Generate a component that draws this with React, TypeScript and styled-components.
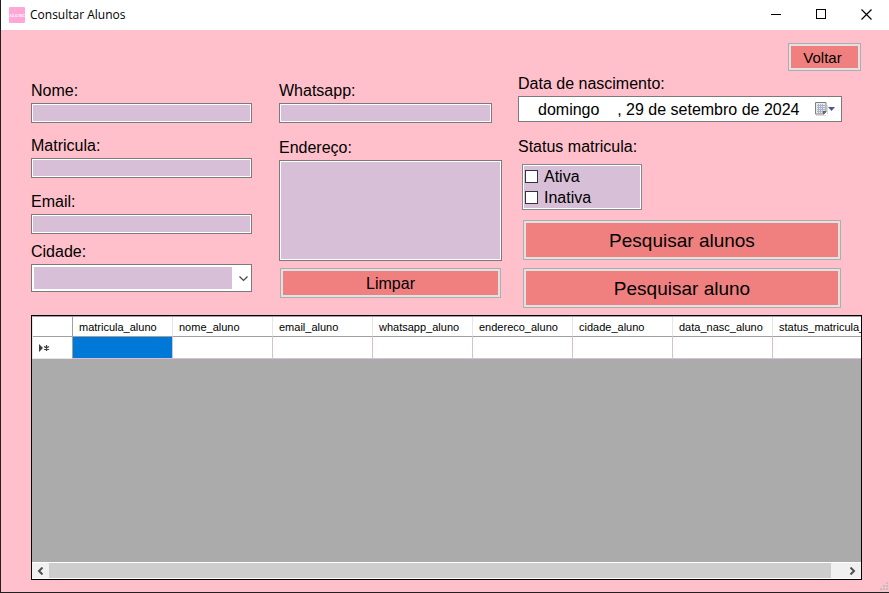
import React from "react";
import styled, { createGlobalStyle, css } from "styled-components";

const GlobalStyle = createGlobalStyle`
  *, *::before, *::after { box-sizing: border-box; }
  body { margin: 0; background: #ffc0cb; }
  button, input, select, textarea { font: inherit; color: inherit; margin: 0; border-radius: 0; }
`;

const sans = `"Liberation Sans", Arial, sans-serif`;

const Window = styled.div`
  position: relative;
  display: flex;
  flex-direction: column;
  min-height: 100vh;
  border-left: 1px solid #1f1f1f;
  border-bottom: 1px solid #1f1f1f;
  background: #ffc0cb;
  color: #000;
  font: 16px/20px ${sans};
`;

const TitleBar = styled.header`
  display: flex;
  align-items: center;
  height: 30px;
  padding-left: 8px;
  background: #fff;
`;

const Title = styled.h1`
  flex: 1;
  margin: 0 0 0 5px;
  font: 12px/16px "Open Sans", "Noto Sans", sans-serif;
`;

const CaptionButton = styled.button`
  display: grid;
  place-items: center;
  width: 45px;
  height: 30px;
  padding: 0;
  border: 0;
  background: transparent;
`;

const Client = styled.main`
  flex: 1;
  display: flex;
  flex-direction: column;
  padding: 13px 27px 12px 30px;
`;

const Toolbar = styled.div`
  display: flex;
  justify-content: flex-end;
  padding-right: 1px;
`;

const actionSizes = {
  small: css`width: 73px; height: 28px; padding-right: 4px; font-size: 15px;`,
  medium: css`height: 30px; font-size: 16px;`,
  large: css`height: 40px; font-size: 19px;`,
};

const ActionButton = styled.button<{ $size: keyof typeof actionSizes }>`
  padding: 1px 0 0;
  border: 1px solid #adadad;
  background: #f08080;
  box-shadow: inset 0 0 0 2px #e1e1e1;
  ${(p) => actionSizes[p.$size]}
`;

const Form = styled.form`
  display: grid;
  grid-template-columns: 248fr 239fr 324fr;
  align-items: start;
  padding-right: 20px;
`;

const Column = styled.div<{ $top: number; $right?: number }>`
  display: flex;
  flex-direction: column;
  padding-top: ${(p) => p.$top}px;
  padding-right: ${(p) => p.$right ?? 0}px;
`;

const Field = styled.div<{ $before?: number; $inset?: number }>`
  display: flex;
  flex-direction: column;
  gap: 2px;
  margin-top: ${(p) => p.$before ?? 0}px;
  padding-right: ${(p) => p.$inset ?? 0}px;
`;

const box = css`
  width: 100%;
  border: 1px solid #7a7a7a;
  background: #d8bfd8;
  box-shadow: inset 0 0 0 1px #fff;
  outline: none;
`;

const TextBox = styled.input`
  ${box}
  height: 20px;
  padding: 0 3px;
`;

const TextArea = styled.textarea`
  ${box}
  display: block;
  height: 101px;
  padding: 3px;
  resize: none;
`;

const Combo = styled.div`
  position: relative;
  display: flex;

  svg {
    position: absolute;
    right: 4px;
    top: 12px;
    pointer-events: none;
  }
`;

const Select = styled.select`
  appearance: none;
  width: 100%;
  height: 28px;
  padding: 2px 19px 2px 2px;
  border: 1px solid #7a7a7a;
  background: linear-gradient(#d8bfd8, #d8bfd8) content-box, #fff;
`;

const DatePicker = styled.div`
  display: flex;
  align-items: center;
  height: 26px;
  border: 1px solid #7a7a7a;
  background: #fff;
`;

const DateInput = styled.input`
  flex: 1;
  min-width: 0;
  height: 24px;
  padding: 2px 0 0 19px;
  border: 0;
  background: transparent;
  outline: none;
`;

const CalendarButton = styled.button`
  display: flex;
  padding: 0 5px 0 0;
  border: 0;
  background: transparent;
`;

const StatusGroup = styled.fieldset`
  min-width: 0;
  margin: 15px 0 0;
  padding: 0;
  border: 0;
`;

const StatusTitle = styled.legend`
  padding: 0;
`;

const CheckList = styled.div`
  width: 120px;
  margin: 7px 0 0 4px;
  padding: 1px 2px;
  border: 1px solid #828790;
  background: #d8bfd8;
  box-shadow: inset 0 0 0 1px #fff;
`;

const CheckRow = styled.label`
  display: flex;
  align-items: center;
  gap: 6px;
  height: 21px;
`;

const CheckBox = styled.input`
  appearance: none;
  width: 13px;
  height: 13px;
  border: 1px solid #333;
  background: #fff;

  &:checked { background: #0078d7; }
`;

const ButtonStack = styled.div<{ $top: number; $left: number }>`
  display: flex;
  flex-direction: column;
  gap: 8px;
  margin: ${(p) => p.$top}px 1px 0 ${(p) => p.$left}px;
`;

const DataGrid = styled.section`
  flex: 1;
  display: flex;
  flex-direction: column;
  min-width: 0;
  min-height: 160px;
  margin-top: 7px;
  border: 1px solid #000;
  background: #ababab;
`;

const GridView = styled.div`
  flex: 1;
  overflow: hidden;
`;

const Table = styled.table`
  width: 841px;
  table-layout: fixed;
  border-collapse: separate;
  border-spacing: 0;
  border-top: 1px solid #a0a0a0;
  border-left: 1px solid #e5e5e5;
  background: #fff;
  font-size: 11px;
  line-height: 13px;
`;

const ColumnHeader = styled.th`
  height: 20px;
  padding: 2px 0 0 6px;
  border-right: 1px solid #e5e5e5;
  border-bottom: 1px solid #a0a0a0;
  text-align: left;
  font-weight: normal;
  white-space: nowrap;

  &:first-child {
    width: 40px;
    border-right-color: #a0a0a0;
  }
`;

const RowHeader = styled.th`
  height: 22px;
  padding: 0 0 0 6px;
  border-right: 1px solid #a0a0a0;
  border-bottom: 1px solid #e5e5e5;
  text-align: left;

  svg { display: block; }
`;

const Cell = styled.td<{ $selected?: boolean }>`
  padding: 0;
  border-right: 1px solid #d8bfd8;
  border-bottom: 1px solid #d8bfd8;
  background: ${(p) => (p.$selected ? "#0078d7" : "#fff")};
  background-clip: padding-box;
`;

const ScrollBar = styled.div`
  display: flex;
  height: 17px;
  border-top: 1px solid #fff;
  border-bottom: 1px solid #fff;
  background: #f0f0f0;
`;

const ScrollButton = styled.button`
  display: grid;
  place-items: center;
  width: 17px;
  padding: 0;
  border: 0;
  background: transparent;
`;

const ScrollTrack = styled.div`
  flex: 1;
  padding-right: 13px;
`;

const ScrollThumb = styled.div`
  height: 100%;
  background: #cdcdcd;
`;

const Grip = styled.svg`
  position: absolute;
  right: 1px;
  bottom: 2px;
`;

const AppIcon = () => (
  <svg width="16" height="16" viewBox="0 0 16 16" aria-hidden="true">
    <rect width="16" height="16" rx="1" fill="#ffa8d8" />
    <text x="8" y="10" textAnchor="middle" fontFamily="Liberation Serif, serif" fontStyle="italic" fontWeight="bold" fontSize="5" fill="#fff">
      ALURC
    </text>
  </svg>
);

const CalendarIcon = () => (
  <svg width="22" height="16" viewBox="0 0 22 16" aria-hidden="true">
    <path d="M2 14.500h10M13.500 4v9" stroke="#dedbd9" />
    <path d="M1.500 1.500h10.500v9.500l-2 2h-8.500z" fill="#e6eaf1" stroke="#857d7a" />
    <path d="M3 4.500h8M3 6.500h8M3 8.500h8M3 10.500h6M4.500 3v9M6.500 3v9M8.500 3v9" stroke="#a9b4ca" />
    <path d="M9 13.500v-3.500h3.500z" fill="#5f5957" />
    <path d="M14 6h7l-3.500 4z" fill="#46598c" />
  </svg>
);

const columns = [
  "matricula_aluno",
  "nome_aluno",
  "email_aluno",
  "whatsapp_aluno",
  "endereco_aluno",
  "cidade_aluno",
  "data_nasc_aluno",
  "status_matricula_aluno",
];

export default function App() {
  return (
    <>
      <GlobalStyle />
      <Window>
        <TitleBar>
          <AppIcon />
          <Title>Consultar Alunos</Title>
          <CaptionButton type="button" aria-label="Minimizar">
            <svg width="11" height="12" shapeRendering="crispEdges"><path d="M0 5.500h10" stroke="#000" /></svg>
          </CaptionButton>
          <CaptionButton type="button" aria-label="Maximizar">
            <svg width="11" height="12" shapeRendering="crispEdges"><path d="M.5.5h9v9h-9z" fill="none" stroke="#000" /></svg>
          </CaptionButton>
          <CaptionButton type="button" aria-label="Fechar">
            <svg width="11" height="12"><path d="M.5.5l10 10M10.500.5l-10 10" stroke="#000" strokeWidth="1.200" /></svg>
          </CaptionButton>
        </TitleBar>
        <Client>
          <Toolbar>
            <ActionButton type="button" $size="small">Voltar</ActionButton>
          </Toolbar>
          <Form onSubmit={(e) => e.preventDefault()}>
            <Column $top={10} $right={27}>
              <Field>
                <label htmlFor="nome">Nome:</label>
                <TextBox id="nome" />
              </Field>
              <Field $before={13}>
                <label htmlFor="matricula">Matricula:</label>
                <TextBox id="matricula" />
              </Field>
              <Field $before={14}>
                <label htmlFor="email">Email:</label>
                <TextBox id="email" type="email" />
              </Field>
              <Field $before={8}>
                <label htmlFor="cidade">Cidade:</label>
                <Combo>
                  <Select id="cidade"><option value="" /></Select>
                  <svg width="9" height="6" aria-hidden="true"><path d="M.5.5l4 4 4-4" fill="none" stroke="#444" strokeWidth="1.200" /></svg>
                </Combo>
              </Field>
            </Column>
            <Column $top={10} $right={16}>
              <Field $inset={10}>
                <label htmlFor="whatsapp">Whatsapp:</label>
                <TextBox id="whatsapp" type="tel" />
              </Field>
              <Field $before={15}>
                <label htmlFor="endereco">Endereço:</label>
                <TextArea id="endereco" />
              </Field>
              <ButtonStack $top={7} $left={1}>
                <ActionButton type="reset" $size="medium">Limpar</ActionButton>
              </ButtonStack>
            </Column>
            <Column $top={3}>
              <Field>
                <label htmlFor="nascimento">Data de nascimento:</label>
                <DatePicker>
                  <DateInput id="nascimento" readOnly value="domingo    , 29 de setembro de 2024" />
                  <CalendarButton type="button" aria-label="Abrir calendário">
                    <CalendarIcon />
                  </CalendarButton>
                </DatePicker>
              </Field>
              <StatusGroup>
                <StatusTitle>Status matricula:</StatusTitle>
                <CheckList>
                  <CheckRow><CheckBox type="checkbox" />Ativa</CheckRow>
                  <CheckRow><CheckBox type="checkbox" />Inativa</CheckRow>
                </CheckList>
              </StatusGroup>
              <ButtonStack $top={10} $left={5}>
                <ActionButton type="button" $size="large">Pesquisar alunos</ActionButton>
                <ActionButton type="submit" $size="large">Pesquisar aluno</ActionButton>
              </ButtonStack>
            </Column>
          </Form>
          <DataGrid aria-label="Alunos">
            <GridView>
              <Table>
                <thead>
                  <tr>
                    <ColumnHeader scope="col" />
                    {columns.map((name) => (
                      <ColumnHeader key={name} scope="col">{name}</ColumnHeader>
                    ))}
                  </tr>
                </thead>
                <tbody>
                  <tr>
                    <RowHeader scope="row">
                      <svg width="12" height="8" aria-label="Nova linha">
                        <path d="M0 0l4 4-4 4z" fill="#404040" />
                        <path d="M7.500 1v6M5 2.500l5 3M10 2.500l-5 3" stroke="#404040" strokeWidth="1.300" />
                      </svg>
                    </RowHeader>
                    {columns.map((name, i) => (
                      <Cell key={name} $selected={i === 0} />
                    ))}
                  </tr>
                </tbody>
              </Table>
            </GridView>
            <ScrollBar>
              <ScrollButton type="button" aria-label="Rolar para a esquerda">
                <svg width="7" height="8"><path d="M5.500.5L2 4l3.500 3.500" fill="none" stroke="#505050" strokeWidth="2" /></svg>
              </ScrollButton>
              <ScrollTrack><ScrollThumb /></ScrollTrack>
              <ScrollButton type="button" aria-label="Rolar para a direita">
                <svg width="7" height="8"><path d="M1.500.5L5 4 1.500 7.500" fill="none" stroke="#505050" strokeWidth="2" /></svg>
              </ScrollButton>
            </ScrollBar>
          </DataGrid>
        </Client>
        <Grip width="8" height="8" aria-hidden="true">
          <path d="M6 0h2v2h-2zM3 3h2v2h-2zM6 3h2v2h-2zM0 6h2v2h-2zM3 6h2v2h-2zM6 6h2v2h-2z" fill="#bfbfbf" />
        </Grip>
      </Window>
    </>
  );
}
